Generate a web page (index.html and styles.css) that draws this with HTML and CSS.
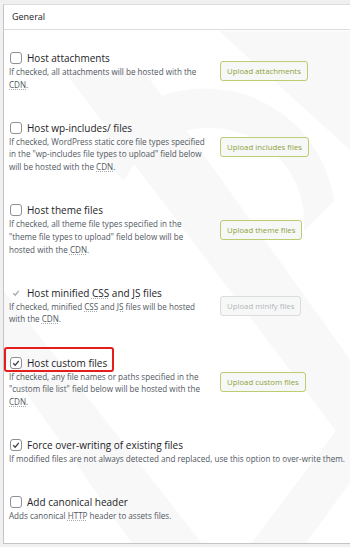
FILE: index.html
```html
<!DOCTYPE html>
<html lang="en">
<head>
    <meta charset="UTF-8">
    <meta name="viewport" content="width=device-width, initial-scale=1.0">
    <title>CDN - General</title>
    <link rel="stylesheet" href="styles.css">
</head>
<body>
    <div class="panel">
        <svg class="watermark" width="347" height="515" viewBox="0 0 347 515">
            <polygon points="215,0 347,0 347,120" />
            <path d="M60,40 L140,40 L347,330 L347,420 Z" />
            <path d="M0,260 L0,330 L130,515 L200,515 Z" />
            <path d="M347,380 L347,450 L300,515 L245,515 Z" />
            <path d="M90,120 A130,130 0 0 1 330,170 L300,200 A95,95 0 0 0 120,150 Z" />
        </svg>

        <h3 class="panel-title">General</h3>

        <div class="panel-body">
            <div class="option">
                <div class="option-text">
                    <label class="option-label"><span class="cb"></span><span>Host attachments</span></label>
                    <p class="desc">If checked, all attachments will be hosted with the <abbr>CDN</abbr>.</p>
                </div>
                <button class="btn">Upload attachments</button>
            </div>

            <div class="option">
                <div class="option-text">
                    <label class="option-label"><span class="cb"></span><span>Host wp-includes/ files</span></label>
                    <p class="desc">If checked, WordPress static core file types specified in the "wp-includes file types to upload" field below will be hosted with the <abbr>CDN</abbr>.</p>
                </div>
                <button class="btn">Upload includes files</button>
            </div>

            <div class="option">
                <div class="option-text">
                    <label class="option-label"><span class="cb"></span><span>Host theme files</span></label>
                    <p class="desc">If checked, all theme file types specified in the "theme file types to upload" field below will be hosted with the <abbr>CDN</abbr>.</p>
                </div>
                <button class="btn">Upload theme files</button>
            </div>

            <div class="option">
                <div class="option-text">
                    <label class="option-label"><span class="cb disabled"><svg viewBox="0 0 10 10"><polyline points="2.2,5.2 4.2,7.2 7.8,2.8" /></svg></span><span>Host minified <abbr>CSS</abbr> and <abbr>JS</abbr> files</span></label>
                    <p class="desc">If checked, minified <abbr>CSS</abbr> and <abbr>JS</abbr> files will be hosted with the <abbr>CDN</abbr>.</p>
                </div>
                <button class="btn btn-disabled">Upload minify files</button>
            </div>

            <div class="option">
                <div class="option-text">
                    <label class="option-label highlighted"><span class="cb"><svg viewBox="0 0 10 10"><polyline points="2.2,5.2 4.2,7.2 7.8,2.8" /></svg></span><span>Host custom files</span></label>
                    <p class="desc">If checked, any file names or paths specified in the "custom file list" field below will be hosted with the <abbr>CDN</abbr>.</p>
                </div>
                <button class="btn">Upload custom files</button>
            </div>

            <div class="option">
                <div class="option-text wide">
                    <label class="option-label"><span class="cb"><svg viewBox="0 0 10 10"><polyline points="2.2,5.2 4.2,7.2 7.8,2.8" /></svg></span><span>Force over-writing of existing files</span></label>
                    <p class="desc">If modified files are not always detected and replaced, use this option to over-write them.</p>
                </div>
            </div>

            <div class="option">
                <div class="option-text wide">
                    <label class="option-label"><span class="cb"></span><span>Add canonical header</span></label>
                    <p class="desc">Adds canonical <abbr>HTTP</abbr> header to assets files.</p>
                </div>
            </div>
        </div>
    </div>
</body>
</html>
```

FILE: styles.css
```css
body {
    margin: 0;
    background: #f0f0f1;
    font-family: "Open Sans", "Noto Sans", sans-serif;
    color: #1d2327;
}
.panel {
    position: relative;
    margin: 4px 0 0 3px;
    background: #fff;
    border-top: 1px solid #dcdcde;
    border-left: 1px solid #c3c4c7;
    border-bottom: 1px solid #c3c4c7;
    height: 540px;
    box-sizing: border-box;
    overflow: hidden;
}
.watermark {
    position: absolute;
    left: 0;
    top: 26px;
    fill: #f8f8f8;
}
.panel-title {
    position: relative;
    margin: 0;
    height: 24px;
    line-height: 24px;
    padding: 0 8px;
    font-size: 9px;
    font-weight: 400;
    border-bottom: 1px solid #dcdcde;
}
.panel-body {
    position: relative;
    padding: 6px 0 0 5px;
}
.option {
    display: flex;
    align-items: center;
    padding: 15px 0 14.7px;
}
.option-text {
    width: 200px;
    flex-shrink: 0;
}
.option-text.wide {
    width: auto;
}
.option-label {
    position: relative;
    display: flex;
    align-items: center;
    width: max-content;
    height: 14px;
    margin-left: 1px;
    font-size: 10px;
    font-weight: 500;
    color: #1d2327;
}
.cb {
    width: 10px;
    height: 10px;
    margin-right: 5px;
    border: 1px solid #8c8f94;
    border-radius: 3px;
    background: #fff;
    display: flex;
    align-items: center;
    justify-content: center;
}
.cb svg {
    width: 10px;
    height: 10px;
    fill: none;
    stroke: #3c434a;
    stroke-width: 1.3;
}
.cb.disabled {
    border-color: transparent;
    background: transparent;
}
.cb.disabled svg {
    stroke: #a7aaad;
}
.highlighted::after {
    content: "";
    position: absolute;
    left: -6px;
    right: -7px;
    top: -9px;
    bottom: -2px;
    border: 2.5px solid #e41d1d;
    border-radius: 3px;
}
.desc {
    margin: 1px 0 0;
    font-size: 8.1px;
    line-height: 12.6px;
    color: #50575e;
}
abbr {
    text-decoration: underline dotted #a7aaad;
    text-underline-offset: 1px;
}
.btn {
    margin-left: 11px;
    height: 20px;
    padding: 0 6px;
    font-family: inherit;
    font-size: 7.8px;
    color: #8fa23a;
    background: #f6f7f7;
    border: 1px solid #bccc6e;
    border-radius: 3px;
}
.btn-disabled {
    color: #b4b7ba;
    border-color: #dcdcde;
}
```
